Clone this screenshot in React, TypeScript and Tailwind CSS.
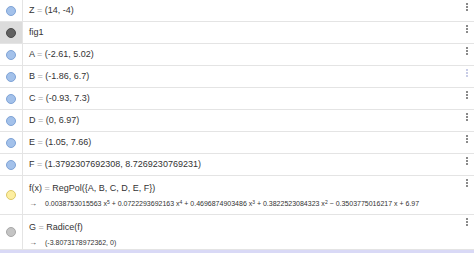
import React from "react";

type Row = {
  color: string;
  border: string;
  main: React.ReactNode;
  output?: React.ReactNode;
  tall?: string;
  selected?: boolean;
  menuFaded?: boolean;
};

const Eq = () => <span className="text-[#9e9e9e]"> = </span>;

const rows: Row[] = [
  { color: "bg-[#a3c1ea]", border: "border-[#7fa3d6]", main: <>Z<Eq />(14, -4)</> },
  { color: "bg-[#616161]", border: "border-[#4a4a4a]", main: <>fig1</>, selected: true },
  { color: "bg-[#a3c1ea]", border: "border-[#7fa3d6]", main: <>A<Eq />(-2.61, 5.02)</> },
  { color: "bg-[#a3c1ea]", border: "border-[#7fa3d6]", main: <>B<Eq />(-1.86, 6.7)</>, menuFaded: true },
  { color: "bg-[#a3c1ea]", border: "border-[#7fa3d6]", main: <>C<Eq />(-0.93, 7.3)</> },
  { color: "bg-[#a3c1ea]", border: "border-[#7fa3d6]", main: <>D<Eq />(0, 6.97)</> },
  { color: "bg-[#a3c1ea]", border: "border-[#7fa3d6]", main: <>E<Eq />(1.05, 7.66)</> },
  { color: "bg-[#a3c1ea]", border: "border-[#7fa3d6]", main: <>F<Eq />(1.3792307692308, 8.7269230769231)</> },
  {
    color: "bg-[#fdeea0]",
    border: "border-[#dcc868]",
    tall: "h-[38px]",
    main: <>f(x)<Eq />RegPol({"{"}A, B, C, D, E, F{"}"})</>,
    output: (
      <>
        0.0038753015563 x<sup className="text-[5px]">5</sup> + 0.0722293692163 x<sup className="text-[5px]">4</sup> +
        0.4696874903486 x<sup className="text-[5px]">3</sup> + 0.3822523084323 x<sup className="text-[5px]">2</sup> −
        0.3503775016217 x + 6.97
      </>
    ),
  },
  {
    color: "bg-[#c4c4c4]",
    border: "border-[#a8a8a8]",
    tall: "h-[34px]",
    main: <>G<Eq />Radice(f)</>,
    output: <>(-3.8073178972362, 0)</>,
  },
];

function Dots({ faded }: { faded?: boolean }) {
  const c = faded ? "bg-[#c9cde6]" : "bg-[#8a8a8a]";
  return (
    <div className="flex w-[4px] flex-col items-center gap-[1px] pt-[3px]">
      <span className={`h-[2px] w-[2px] ${c}`} />
      <span className={`h-[2px] w-[2px] ${c}`} />
      <span className={`h-[2px] w-[2px] ${c}`} />
    </div>
  );
}

export default function App() {
  return (
    <div
      className="flex h-[253px] w-[474px] flex-col overflow-hidden bg-white text-[9px] text-[#333333]"
      style={{ fontFamily: '"Liberation Sans", Arial, sans-serif' }}
    >
      {rows.map((r, i) => (
        <div key={i} className="flex shrink-0 border-b border-[#e4e4e4]">
          <div
            className={`flex w-[23px] shrink-0 items-center justify-center border-r border-[#e4e4e4] ${
              r.selected ? "bg-[#dcdcdc]" : ""
            }`}
          >
            <span className={`h-[10px] w-[10px] rounded-full border ${r.color} ${r.border}`} />
          </div>
          <div className={`flex min-w-0 flex-1 flex-col pl-[6px] ${r.output ? `${r.tall} pt-[7px]` : "h-[21px] justify-center"}`}>
            <div className="whitespace-nowrap leading-[11px]">{r.main}</div>
            {r.output && (
              <div className="mt-[5px] flex whitespace-nowrap text-[7px] leading-[10px]">
                <span className="w-[16px] text-[8px] text-[#444]">→</span>
                <span>{r.output}</span>
              </div>
            )}
          </div>
          <div className="flex w-[14px] shrink-0 justify-center">
            <Dots faded={r.menuFaded} />
          </div>
        </div>
      ))}
      <div className="flex-1" />
      <div className="h-[5px] shrink-0 bg-[#d9d9f6]" />
    </div>
  );
}
